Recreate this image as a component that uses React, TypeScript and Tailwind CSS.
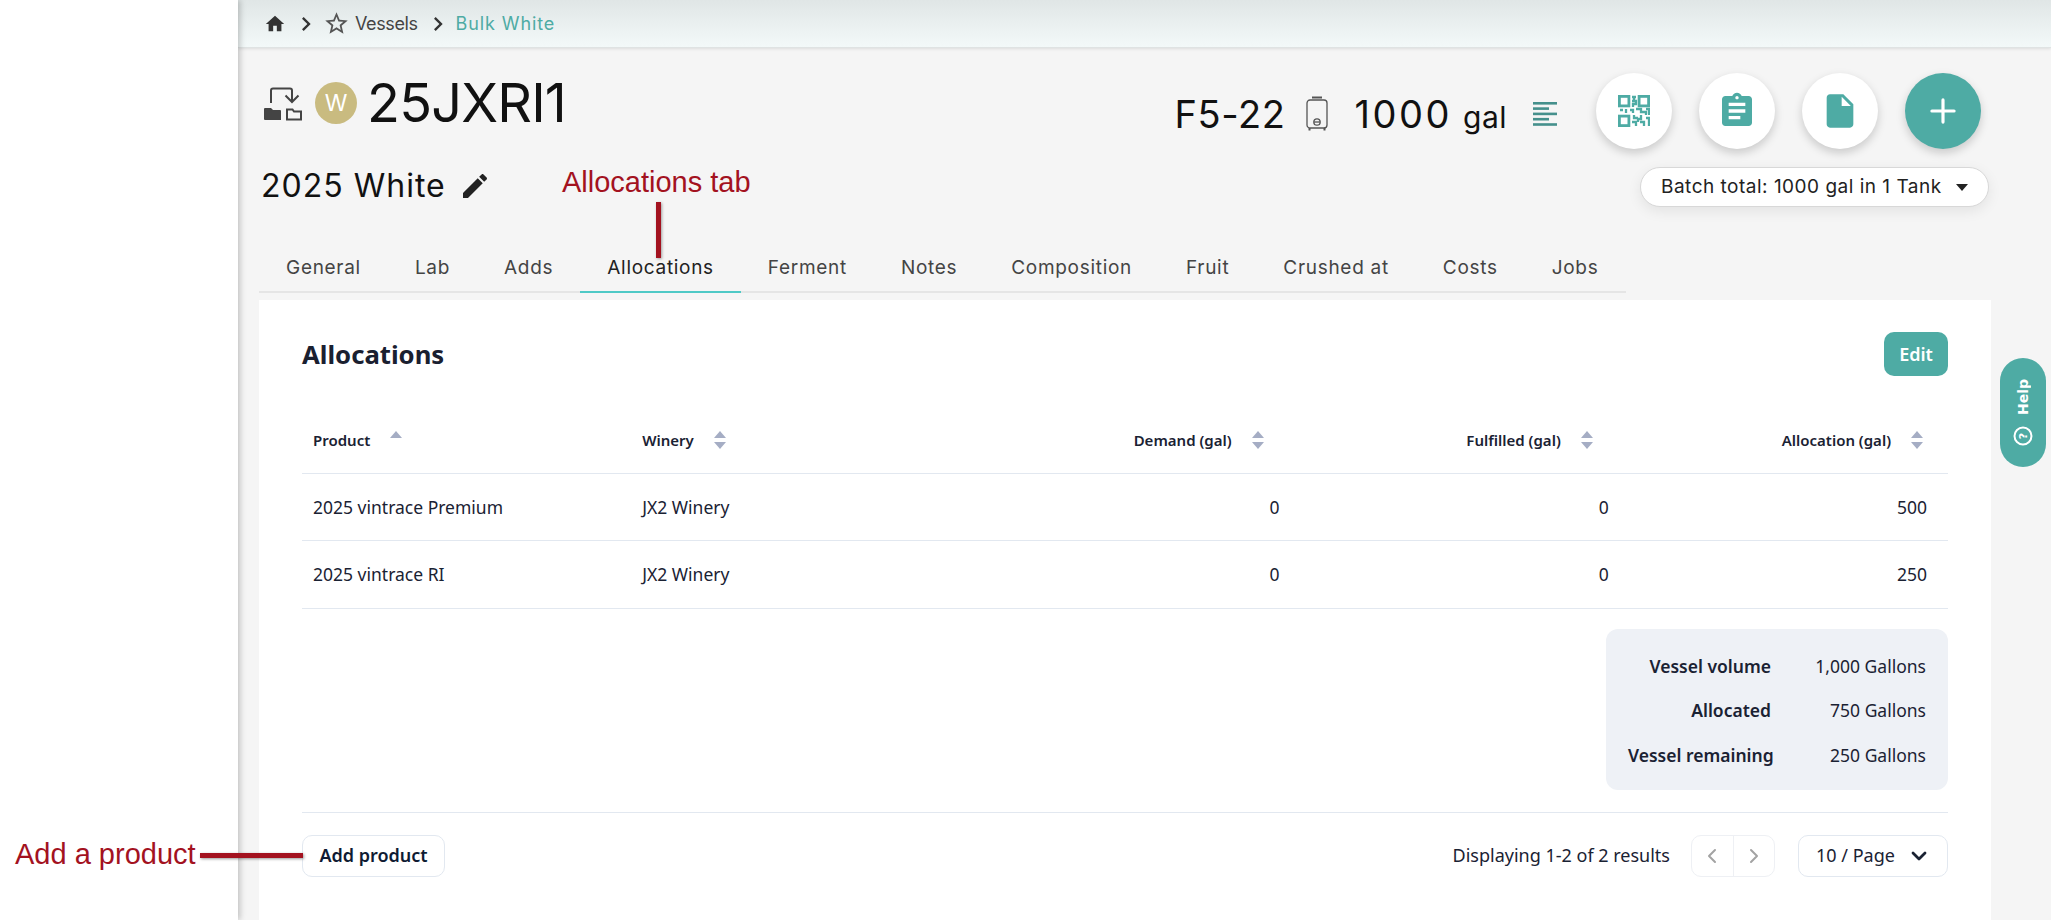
import React from 'react';
import { ChevronDown, ChevronLeft, ChevronRight, Plus } from 'lucide-react';

const tabs = ['General', 'Lab', 'Adds', 'Allocations', 'Ferment', 'Notes', 'Composition', 'Fruit', 'Crushed at', 'Costs', 'Jobs'];

const rows = [
  { product: '2025 vintrace Premium', winery: 'JX2 Winery', demand: 0, fulfilled: 0, allocation: 500 },
  { product: '2025 vintrace RI', winery: 'JX2 Winery', demand: 0, fulfilled: 0, allocation: 250 },
];

const summary = [
  { label: 'Vessel volume', value: '1,000 Gallons' },
  { label: 'Allocated', value: '750 Gallons' },
  { label: 'Vessel remaining', value: '250 Gallons' },
];

const MuiIcon = ({ d, className }: { d: string; className?: string }) => (
  <svg viewBox="0 0 24 24" fill="currentColor" className={className}>
    <path d={d} />
  </svg>
);

const homePath = 'M10 20v-6h4v6h5v-8h3L12 3 2 12h3v8z';
const starPath = 'M22 9.24l-7.19-.62L12 2 9.19 8.63 2 9.24l5.46 4.73L5.82 21 12 17.27 18.18 21l-1.63-7.03L22 9.24zM12 15.4l-3.76 2.27 1-4.28-3.32-2.88 4.38-.38L12 6.1l1.71 4.04 4.38.38-3.32 2.88 1 4.28L12 15.4z';
const chevronPath = 'M10 6L8.59 7.41 13.17 12l-4.58 4.59L10 18l6-6z';
const pencilPath = 'M3 17.25V21h3.75L17.81 9.94l-3.75-3.75L3 17.25zM20.71 7.04c.39-.39.39-1.02 0-1.41l-2.34-2.34c-.39-.39-1.02-.39-1.41 0l-1.83 1.83 3.75 3.75 1.83-1.83z';
const clipboardPath = 'M19 3h-4.18C14.4 1.84 13.3 1 12 1c-1.3 0-2.4.84-2.82 2H5c-1.1 0-2 .9-2 2v14c0 1.1.9 2 2 2h14c1.1 0 2-.9 2-2V5c0-1.1-.9-2-2-2zm-7 0c.55 0 1 .45 1 1s-.45 1-1 1-1-.45-1-1 .45-1 1-1zm2 14H7v-2h7v2zm3-4H7v-2h10v2zm0-4H7V7h10v2z';
const filePath = 'M6 2c-1.1 0-1.99.9-1.99 2L4 20c0 1.1.89 2 1.99 2H18c1.1 0 2-.9 2-2V8l-6-6H6zm7 7V3.5L18.5 9H13z';

const TransferIcon = () => (
  <svg viewBox="0 0 40 36" className="w-[40px] h-[36px] text-[#444]" fill="none" stroke="currentColor">
    <path d="M8 18V5.5a2 2 0 0 1 2-2h17a2 2 0 0 1 2 2V16" strokeWidth="2" />
    <path d="M22.5 10.5L29 17l6.5-6.5" strokeWidth="2" />
    <path d="M1 24a1 1 0 0 1 1-1h6l2 2h7a1 1 0 0 1 1 1v9H2a1 1 0 0 1-1-1z" fill="currentColor" stroke="none" />
    <path d="M24 24.5h5.5l1.5 2h7v8h-14z" strokeWidth="2" />
  </svg>
);

const TankIcon = () => (
  <svg viewBox="0 0 22 36" className="w-[22px] h-[36px] text-[#555]" fill="none" stroke="currentColor" strokeWidth="1.3">
    <path d="M6 1.5h10" strokeWidth="2" />
    <rect x="1" y="4" width="20" height="28" rx="3" />
    <path d="M3.5 32v2.5M18.5 32v2.5" strokeWidth="2" />
    <circle cx="11" cy="26" r="3.2" />
    <path d="M8 26h6" />
  </svg>
);

const ListIcon = () => (
  <svg viewBox="0 0 24 24" className="w-[24px] h-[24px] text-[#45908c]" fill="currentColor">
    <rect x="0" y="0" width="24" height="2.6" />
    <rect x="0" y="5.3" width="16" height="2.6" />
    <rect x="0" y="10.6" width="24" height="2.6" />
    <rect x="0" y="15.9" width="16" height="2.6" />
    <rect x="0" y="21.2" width="24" height="2.6" />
  </svg>
);

const QrIcon = () => (
  <svg viewBox="0 0 32 32" className="w-[32px] h-[32px] text-[#4eaba4]" fill="none" stroke="currentColor">
    <rect x="1.4" y="1.4" width="9.5" height="9.5" strokeWidth="2.8" />
    <rect x="21.1" y="1.4" width="9.5" height="9.5" strokeWidth="2.8" />
    <rect x="1.4" y="21.1" width="9.5" height="9.5" strokeWidth="2.8" />
    <path d="M14 2h4M16 2v4M14 6h4v3h-3v3M2 15h3M8 14v4M12 15h3v3M18 14h5v3h5v3M28 14h3v6M16 20v3h4M23 20v4h-3v3M14 27h4v4M22 27h4v4M28 23h3v8" strokeWidth="2.3" />
  </svg>
);

const SortIcon = ({ onlyUp }: { onlyUp?: boolean }) => (
  <svg viewBox="0 0 12 18" className="w-[12px] h-[18px] text-[#a5adc4]" fill="currentColor">
    <path d="M6 0l6 7H0z" />
    {!onlyUp && <path d="M6 18l6-7H0z" />}
  </svg>
);

const RoundButton = ({ children, teal }: { children: React.ReactNode; teal?: boolean }) => (
  <button className={`w-[76px] h-[76px] rounded-full flex items-center justify-center shadow-[0_4px_10px_rgba(0,0,0,0.18)] ${teal ? 'bg-[#4eaba4] text-white' : 'bg-white text-[#4eaba4]'}`}>
    {children}
  </button>
);

const columns = ['Product', 'Winery', 'Demand (gal)', 'Fulfilled (gal)', 'Allocation (gal)'];

export default function App() {
  return (
    <div className="relative flex w-[2051px] h-[920px] overflow-hidden bg-white text-[#1a2233] font-['Noto_Sans',sans-serif]">
      {/* blank nav column */}
      <aside className="relative z-10 w-[238px] shrink-0 bg-white shadow-[2px_0_6px_rgba(0,0,0,0.22)]" />

      <main className="flex-1 flex flex-col bg-[#f5f5f5] font-['Inter',sans-serif]">
        {/* ── Breadcrumb ── */}
        <nav className="h-[48px] shrink-0 flex items-center pl-[26px] text-[18px] text-[#444] bg-gradient-to-b from-[#e0e6e6] to-[#f3f9f9] border-b border-[#dfe3e3] shadow-[0_1px_3px_rgba(0,0,0,0.1)]">
          <MuiIcon d={homePath} className="w-[22px] h-[22px] text-[#333]" />
          <MuiIcon d={chevronPath} className="w-[28px] h-[28px] ml-[6px] text-[#333]" />
          <MuiIcon d={starPath} className="w-[27px] h-[27px] ml-[3px] text-[#555]" />
          <span className="ml-[5px] tracking-[-0.4px]">Vessels</span>
          <MuiIcon d={chevronPath} className="w-[28px] h-[28px] ml-[6px] text-[#333]" />
          <span className="ml-[4px] text-[#4eaba4] tracking-[0.9px]">Bulk White</span>
        </nav>

        {/* ── Batch header ── */}
        <div className="h-[200px] shrink-0 flex justify-between pl-[23px] pr-[62px] pt-[25px]">
          <div className="pt-[4px]">
            <div className="flex items-center h-[52px]">
              <span className="ml-[2px]"><TransferIcon /></span>
              <span className="ml-[12px] w-[42px] h-[42px] rounded-full bg-[#c9bb80] text-white text-[23px] flex items-center justify-center">W</span>
              <h1 className="ml-[10px] text-[54px] leading-none text-[#111] tracking-[-0.8px]">25JXRI1</h1>
            </div>
            <div className="flex items-center mt-[39px] h-[36px]">
              <span className="text-[32px] leading-none text-[#111] tracking-[1px]">2025 White</span>
              <MuiIcon d={pencilPath} className="w-[32px] h-[32px] ml-[13px] text-[#222]" />
            </div>
          </div>

          <div className="flex flex-col items-end">
            <div className="flex items-center pr-[8px]">
              <div className="flex items-center pt-[5px]">
                <span className="text-[38px] leading-none text-[#111] tracking-[0.6px]">F5-22</span>
                <span className="ml-[20px]"><TankIcon /></span>
                <span className="ml-[27px] text-[38px] leading-none text-[#111] tracking-[2.5px]">1000</span>
                <span className="ml-[11px] mt-[6px] text-[30px] leading-none text-[#111] tracking-[0.5px]">gal</span>
                <span className="ml-[26px] mr-[39px]"><ListIcon /></span>
              </div>
              <div className="flex gap-[27px]">
                <RoundButton><QrIcon /></RoundButton>
                <RoundButton><MuiIcon d={clipboardPath} className="w-[40px] h-[40px]" /></RoundButton>
                <RoundButton><MuiIcon d={filePath} className="w-[40px] h-[40px]" /></RoundButton>
                <RoundButton teal><Plus className="w-[38px] h-[38px]" strokeWidth={2} /></RoundButton>
              </div>
            </div>
            <button className="mt-[18px] w-[349px] h-[40px] flex items-center justify-between pl-[20px] pr-[20px] rounded-full bg-white border border-[#d8d8d8] shadow-[0_4px_14px_rgba(0,0,0,0.08)] text-[19px] text-[#222] tracking-[0.5px]">
              Batch total: 1000 gal in 1 Tank
              <svg viewBox="0 0 12 7" className="w-[12px] h-[7px] text-[#222]" fill="currentColor"><path d="M0 0h12L6 7z" /></svg>
            </button>
          </div>
        </div>

        {/* ── Tabs ── */}
        <div className="shrink-0 ml-[21px] w-[1367px] flex border-b-2 border-[#e5e5e5] h-[45px] text-[19px] text-[#444]">
          {tabs.map((tab) => (
            <div
              key={tab}
              className={`px-[27px] h-[45px] flex items-center whitespace-nowrap tracking-[0.7px] ${tab === 'Allocations' ? 'pb-[3px] border-b-2 border-[#4fc9c6] text-[#222]' : 'pb-[5px]'}`}
            >
              {tab}
            </div>
          ))}
        </div>

        {/* ── Card ── */}
        <section className="flex-1 mt-[7px] ml-[21px] w-[1732px] bg-white pt-[32px] pl-[43px] pr-[43px] font-['Noto_Sans',sans-serif]">
          <div className="flex items-center justify-between h-[44px]">
            <h2 className="pt-[2px] text-[25.7px] font-bold text-[#1a2030]">Allocations</h2>
            <button className="w-[64px] h-[44px] rounded-[10px] bg-[#4eaba4] text-white text-[18px] font-semibold">Edit</button>
          </div>

          <table className="w-full table-fixed mt-[35px] border-collapse">
            <thead>
              <tr className="h-[62px] border-b border-[#e2e8f0]">
                {columns.map((col, i) => (
                  <th key={col} className={`font-semibold text-[15px] pb-[3px] ${i < 2 ? 'text-left pl-[11px]' : 'text-right'} ${i === 4 ? 'pr-[25px]' : i >= 2 ? 'pr-[26px]' : ''}`}>
                    <span className="inline-flex items-center gap-[20px]">
                      {col}
                      <SortIcon onlyUp={i === 0} />
                    </span>
                  </th>
                ))}
              </tr>
            </thead>
            <tbody className="text-[17.5px]">
              {rows.map((row) => (
                <tr key={row.product} className="h-[67.5px] border-b border-[#e2e8f0]">
                  <td className="pl-[11px]">{row.product}</td>
                  <td className="pl-[11px]">{row.winery}</td>
                  <td className="text-right pr-[10px]">{row.demand}</td>
                  <td className="text-right pr-[10px]">{row.fulfilled}</td>
                  <td className="text-right pr-[21px]">{row.allocation}</td>
                </tr>
              ))}
            </tbody>
          </table>

          <div className="flex justify-end mt-[20px]">
            <div className="w-[342px] h-[161px] rounded-[12px] bg-[#eef1f6] pt-[15px] px-[22px] text-[17.5px]">
              {summary.map((s) => (
                <div key={s.label} className="flex justify-between items-center h-[44.5px]">
                  <span className="w-[143px] text-right font-semibold whitespace-nowrap">{s.label}</span>
                  <span>{s.value}</span>
                </div>
              ))}
            </div>
          </div>

          <div className="mt-[22px] pt-[22px] border-t border-[#e2e8f0] flex items-center justify-between">
            <button className="w-[143px] h-[42px] rounded-[10px] border border-[#e2e8f0] bg-white text-[18px] font-semibold text-[#0f1b33]">Add product</button>
            <div className="flex items-center">
              <span className="text-[18px]">Displaying 1-2 of 2 results</span>
              <div className="ml-[21px] w-[84px] h-[42px] flex rounded-[10px] border border-[#eef0f4] text-[#a3a3a3]">
                <span className="flex-1 flex items-center justify-center border-r border-[#eef0f4]"><ChevronLeft className="w-[24px] h-[24px]" /></span>
                <span className="flex-1 flex items-center justify-center"><ChevronRight className="w-[24px] h-[24px]" /></span>
              </div>
              <div className="ml-[23px] w-[150px] h-[42px] flex items-center justify-between pl-[17px] pr-[16px] rounded-[10px] border border-[#e2e8f0] text-[18px]">
                10 / Page
                <ChevronDown className="w-[24px] h-[24px]" strokeWidth={2.8} />
              </div>
            </div>
          </div>
        </section>
      </main>

      {/* ── Help tab ── */}
      <button className="absolute left-[2000px] top-[358px] w-[46px] h-[109px] rounded-[23px] bg-[#4eaba4] text-white flex flex-col-reverse items-center justify-center gap-[10px] font-['DejaVu_Sans',sans-serif]">
        <svg viewBox="0 0 20 20" className="w-[20px] h-[20px] -rotate-90" fill="none" stroke="currentColor" strokeWidth="2">
          <circle cx="10" cy="10" r="8.5" />
          <text x="10" y="14" textAnchor="middle" fontSize="11" fontWeight="700" fill="currentColor" stroke="none">?</text>
        </svg>
        <span className="[writing-mode:vertical-rl] rotate-180 text-[14px] font-bold leading-none">Help</span>
      </button>

      {/* ── Annotations ── */}
      <div className="absolute z-20 left-[562px] top-[168px] text-[29px] leading-none text-[#a3121f] whitespace-nowrap font-['Liberation_Sans',sans-serif]">Allocations tab</div>
      <div className="absolute z-20 left-[656px] top-[202px] w-[5px] h-[56px] bg-[#a3121f] shadow-[1px_1px_3px_rgba(0,0,0,0.35)]" />
      <div className="absolute z-20 left-[15px] top-[840px] text-[29px] leading-none text-[#a3121f] whitespace-nowrap font-['Liberation_Sans',sans-serif]">Add a product</div>
      <div className="absolute z-20 left-[200px] top-[853px] w-[103px] h-[5px] bg-[#a3121f] shadow-[1px_1px_3px_rgba(0,0,0,0.4)]" />
    </div>
  );
}
